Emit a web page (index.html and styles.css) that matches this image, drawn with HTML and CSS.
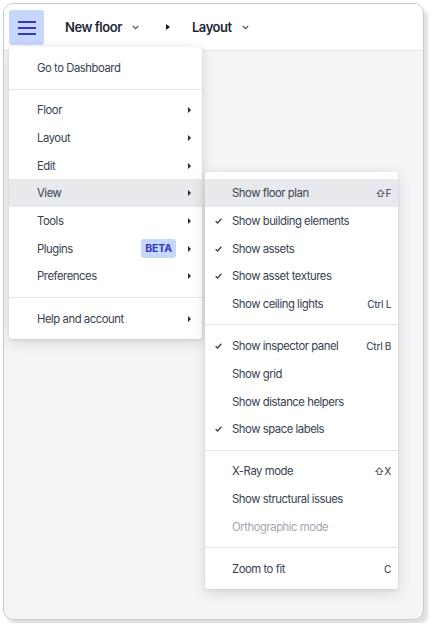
FILE: index.html
```html
<!DOCTYPE html>
<html lang="en">
<head>
    <meta charset="UTF-8">
    <meta name="viewport" content="width=device-width, initial-scale=1.0">
    <title>Floor editor menu</title>
    <link rel="stylesheet" href="styles.css">
</head>
<body>

<div class="window">
    <div class="topbar">
        <button class="menu-btn" aria-label="Menu">
            <svg width="18" height="14" viewBox="0 0 18 14">
                <path d="M0 1h18M0 7h18M0 13h18" stroke="#3538b8" stroke-width="2"/>
            </svg>
        </button>
        <div class="crumb first">New floor
            <svg class="chev" width="7" height="5" viewBox="0 0 7 5"><path d="M0.8 1 L3.5 3.7 L6.2 1" fill="none" stroke="#4b5563" stroke-width="1.1"/></svg>
        </div>
        <span class="caret-right"></span>
        <div class="crumb">Layout
            <svg class="chev" width="7" height="5" viewBox="0 0 7 5"><path d="M0.8 1 L3.5 3.7 L6.2 1" fill="none" stroke="#4b5563" stroke-width="1.1"/></svg>
        </div>
    </div>
    <div class="canvas"></div>

    <!-- main menu -->
    <div class="menu main-menu">
        <div class="item">Go to Dashboard</div>
        <div class="sep"></div>
        <div class="item">Floor <span class="arrow"></span></div>
        <div class="item">Layout <span class="arrow"></span></div>
        <div class="item">Edit <span class="arrow"></span></div>
        <div class="item active">View <span class="arrow"></span>

            <div class="menu sub-menu">
                <div class="item active"><span class="check"></span>Show floor plan <span class="key">&#8679;F</span></div>
                <div class="item"><span class="check on"></span>Show building elements</div>
                <div class="item"><span class="check on"></span>Show assets</div>
                <div class="item"><span class="check on"></span>Show asset textures</div>
                <div class="item"><span class="check"></span>Show ceiling lights <span class="key">Ctrl L</span></div>
                <div class="sep"></div>
                <div class="item"><span class="check on"></span>Show inspector panel <span class="key">Ctrl B</span></div>
                <div class="item"><span class="check"></span>Show grid</div>
                <div class="item"><span class="check"></span>Show distance helpers</div>
                <div class="item"><span class="check on"></span>Show space labels</div>
                <div class="sep"></div>
                <div class="item"><span class="check"></span>X-Ray mode <span class="key">&#8679;X</span></div>
                <div class="item"><span class="check"></span>Show structural issues</div>
                <div class="item disabled"><span class="check"></span>Orthographic mode</div>
                <div class="sep"></div>
                <div class="item"><span class="check"></span>Zoom to fit <span class="key">C</span></div>
            </div>
        </div>
        <div class="item">Tools <span class="arrow"></span></div>
        <div class="item">Plugins <span class="badge">BETA</span><span class="arrow"></span></div>
        <div class="item">Preferences <span class="arrow"></span></div>
        <div class="sep"></div>
        <div class="item">Help and account <span class="arrow"></span></div>
    </div>
</div>

</body>
</html>
```

FILE: styles.css
```css
body {
    margin: 0;
    padding: 3px;
    background: #fff;
    font-family: Inter, "Noto Sans", sans-serif;
    color: #374151;
}
.window {
    position: relative;
    width: 419px;
    height: 615px;
    border: 1px solid #c9c9cb;
    border-radius: 10px;
    box-shadow: 4px 5px 3px rgba(0, 0, 0, 0.12);
    background: #f4f5f7;
    overflow: hidden;
}
.topbar {
    height: 46px;
    background: #fff;
    border-bottom: 1px solid #e3e5ea;
    display: flex;
    align-items: center;
    padding-left: 5px;
}
.menu-btn {
    width: 35px;
    height: 35px;
    border: none;
    border-radius: 3px;
    background: #c6d6fc;
    display: flex;
    align-items: center;
    justify-content: center;
    padding: 0;
    margin-top: 1px;
}
.crumb {
    font-size: 13px;
    font-weight: 600;
    letter-spacing: -0.45px;
    color: #1f2937;
    display: flex;
    align-items: center;
}
.crumb.first {
    margin-left: 21px;
}
.chev {
    margin-left: 10px;
    margin-top: 1px;
}
.caret-right {
    width: 0;
    height: 0;
    border-top: 3px solid transparent;
    border-bottom: 3px solid transparent;
    border-left: 4px solid #111827;
    margin: 0 22px 0 27px;
}

.menu {
    position: absolute;
    background: #fff;
    border-radius: 3px;
    box-shadow: 0 3px 14px rgba(0, 0, 0, 0.14), 0 1px 3px rgba(0, 0, 0, 0.08);
    padding: 7px 0;
    font-size: 11.3px;
    letter-spacing: -0.45px;
}
.main-menu {
    left: 5px;
    top: 43px;
    width: 193px;
}
.sub-menu {
    left: calc(100% + 3px);
    top: -7px;
    width: 193px;
}
.item {
    position: relative;
    box-sizing: border-box;
    height: 27.67px;
    display: flex;
    align-items: center;
    padding: 1px 11px 0 28px;
}
.item.active {
    background: #e8e9ed;
}
.sub-menu .item {
    padding-left: 10px;
    padding-right: 7px;
    background: #fff;
}
.sub-menu .item.active {
    background: #e8e9ed;
}
.item.disabled {
    color: #a3a7b0;
}
.arrow {
    margin-left: auto;
    width: 0;
    height: 0;
    border-top: 3px solid transparent;
    border-bottom: 3px solid transparent;
    border-left: 3.5px solid #1f2937;
}
.badge {
    margin-left: auto;
    margin-right: 12px;
    background: #c6d6fc;
    color: #3538b8;
    font-size: 10.5px;
    font-weight: 700;
    letter-spacing: -0.1px;
    border-radius: 3px;
    padding: 3px 4px;
}
.badge + .arrow {
    margin-left: 0;
}
.check {
    width: 17px;
    height: 10px;
    flex-shrink: 0;
}
.check.on {
    background: no-repeat left center url("data:image/svg+xml,%3Csvg xmlns='http://www.w3.org/2000/svg' width='7' height='6' viewBox='0 0 7 6'%3E%3Cpath d='M0.6 3.2 L2.6 5 L6.4 0.8' fill='none' stroke='%23374151' stroke-width='1.3'/%3E%3C/svg%3E");
}
.key {
    margin-left: auto;
    font-size: 10px;
    font-weight: 500;
    letter-spacing: -0.3px;
    color: #4b5563;
}
.sep {
    height: 1px;
    background: #e3e5ea;
    margin: 7px 0 6.5px;
}
```
